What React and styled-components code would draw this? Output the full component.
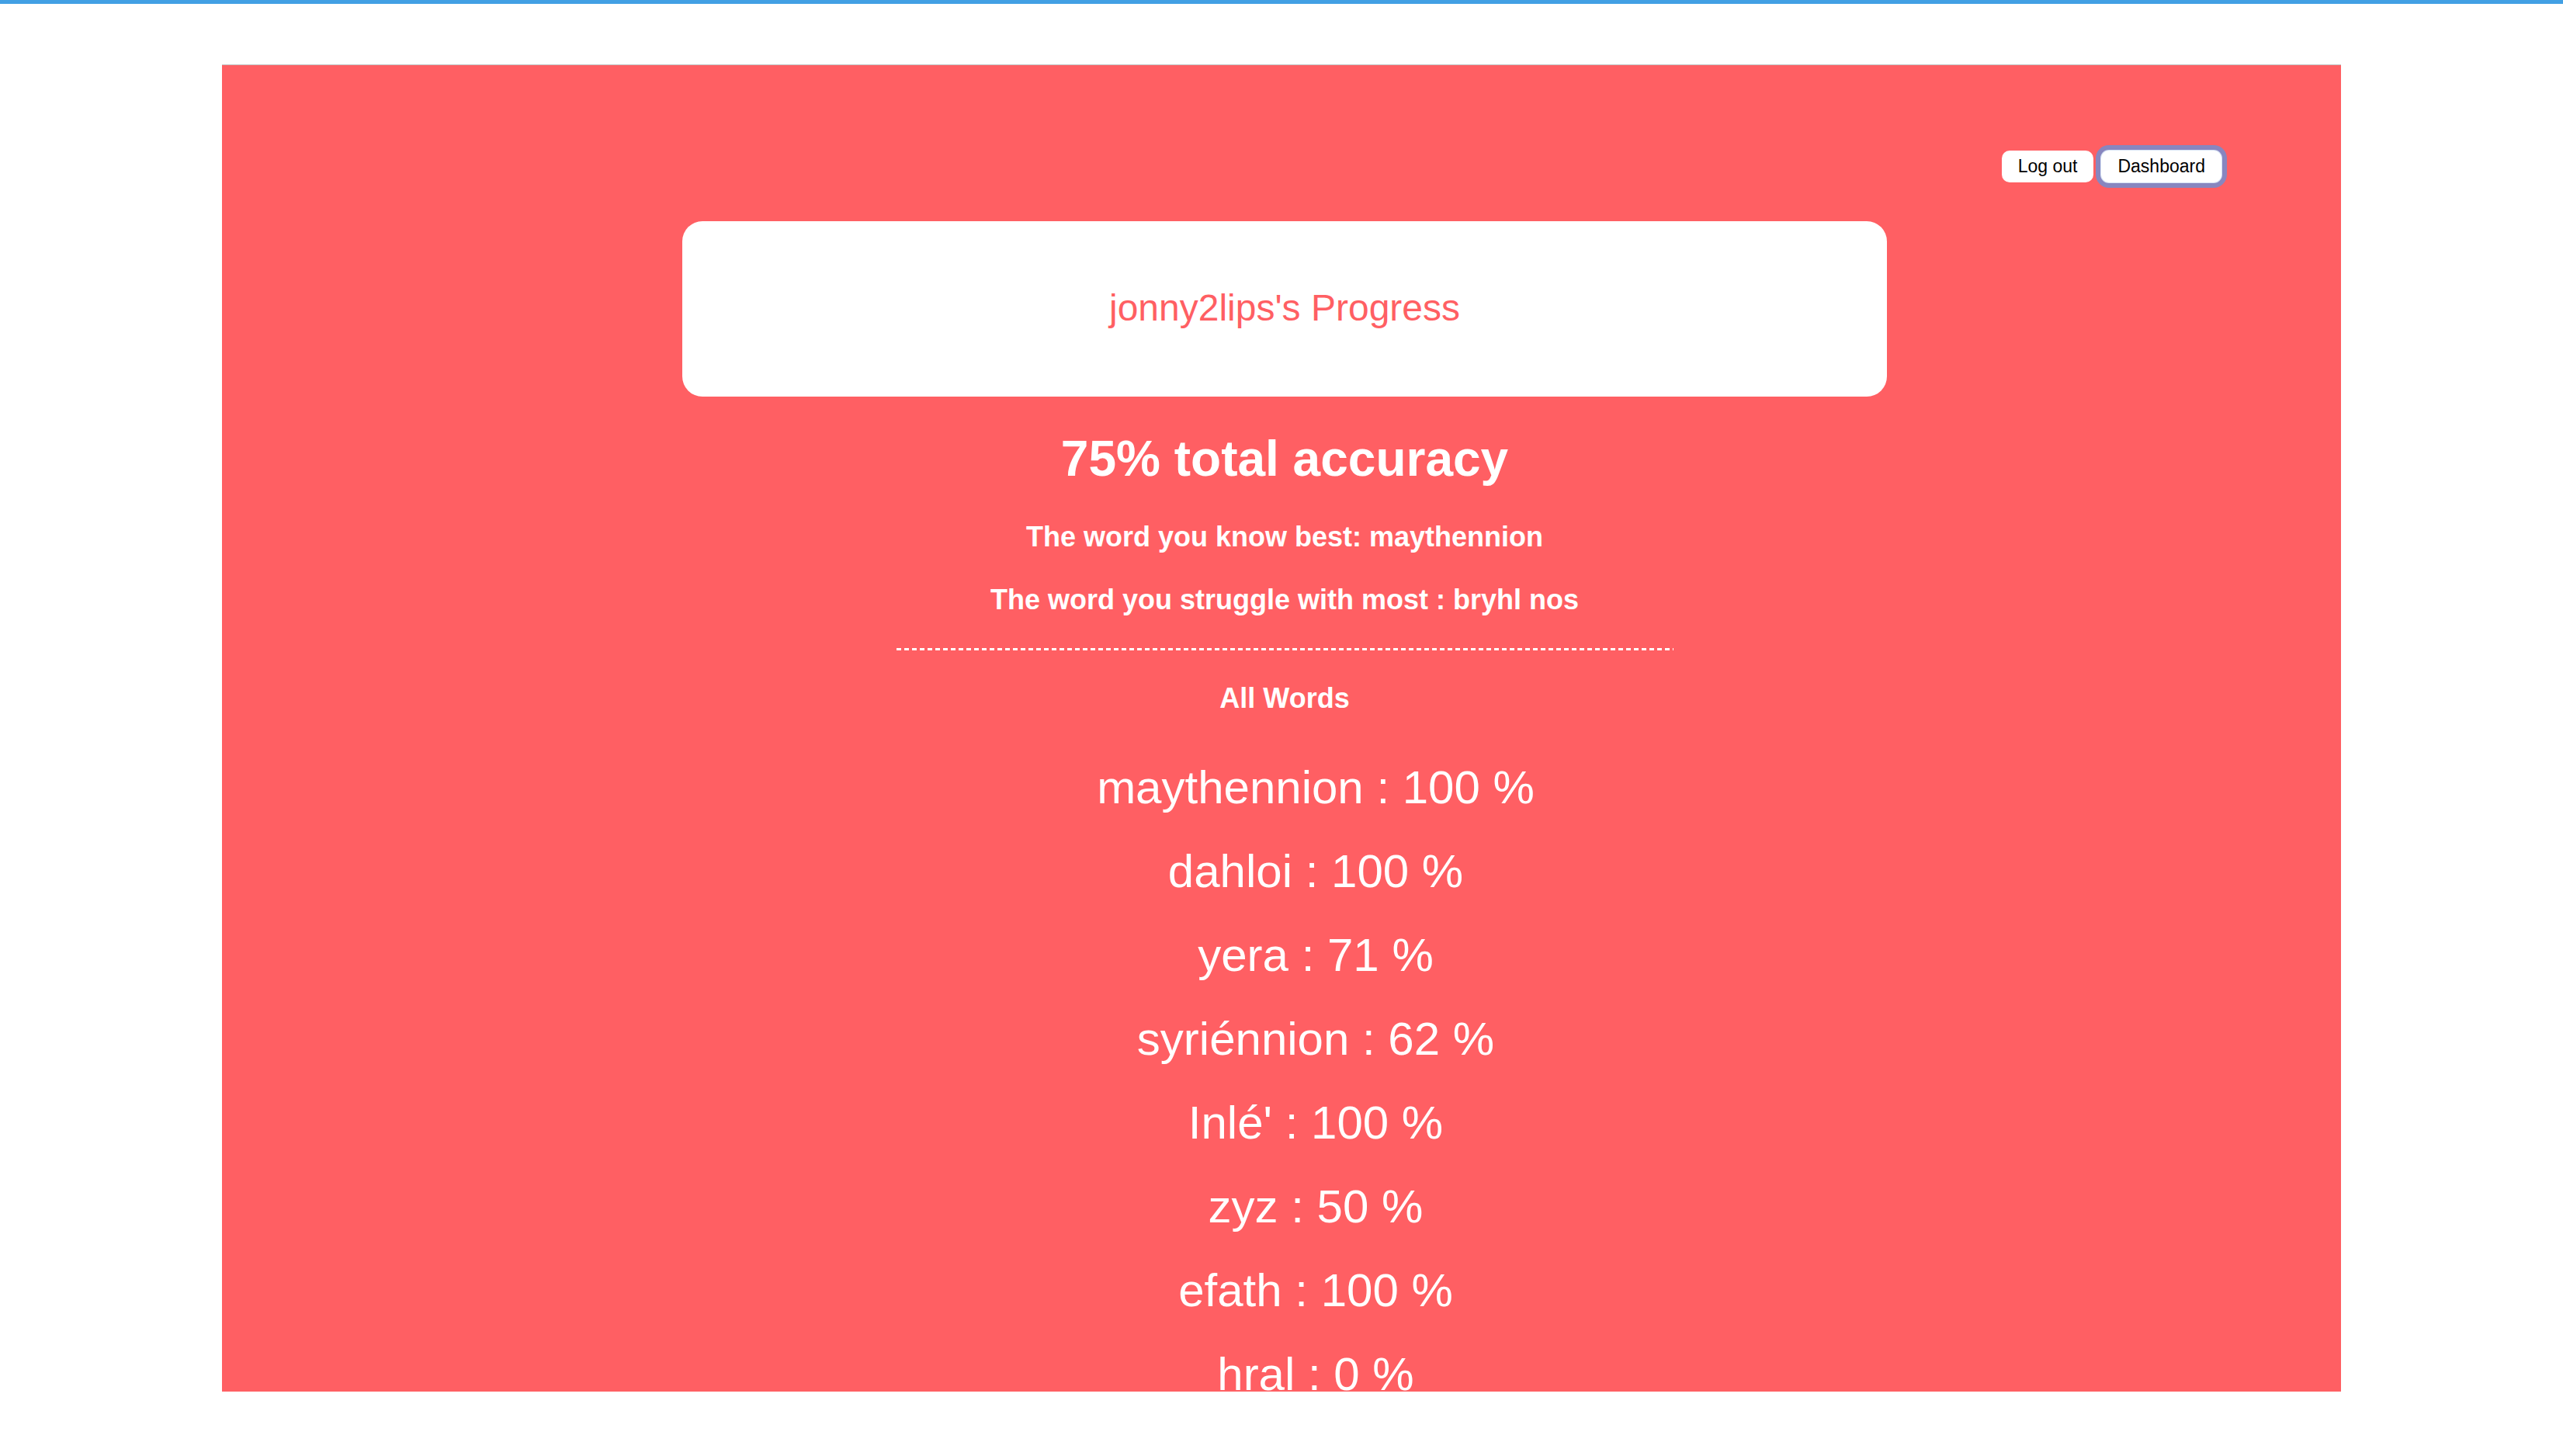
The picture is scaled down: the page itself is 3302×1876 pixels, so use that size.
import React from 'react';
import styled, { createGlobalStyle } from 'styled-components';

const words = [
  { word: 'maythennion', score: 100 },
  { word: 'dahloi', score: 100 },
  { word: 'yera', score: 71 },
  { word: 'syriénnion', score: 62 },
  { word: "Inlé'", score: 100 },
  { word: 'zyz', score: 50 },
  { word: 'efath', score: 100 },
  { word: 'hral', score: 0 },
];

const GlobalStyle = createGlobalStyle`
  body {
    margin: 0;
    background: #fff;
    font-family: "Liberation Sans", Helvetica, Arial, sans-serif;
  }
`;

const App = () => {
  return (
    <>
      <GlobalStyle />
      <TopBar />
      <Panel>
        <Nav>
          <NavButton>Log out</NavButton>
          <NavButton $focused>Dashboard</NavButton>
        </Nav>
        <HeaderCard>
          <CardTitle>jonny2lips's Progress</CardTitle>
        </HeaderCard>
        <Accuracy>75% total accuracy</Accuracy>
        <Stat $gap={43}>The word you know best: maythennion</Stat>
        <Stat $gap={39}>The word you struggle with most : bryhl nos</Stat>
        <Divider />
        <Stat $gap={41}>All Words</Stat>
        <WordList>
          {words.map((w) => (
            <WordItem key={w.word}>{`${w.word} : ${w.score} %`}</WordItem>
          ))}
        </WordList>
      </Panel>
    </>
  );
};

const TopBar = styled.div`
  height: 5px;
  background: #42a0e4;
`;

const Panel = styled.main`
  box-sizing: border-box;
  width: 2730px;
  height: 1709px;
  margin: 79px auto 0;
  padding-left: 8px;
  background: #ff5f63;
  box-shadow: 0 -1px 0 rgba(0, 0, 0, 0.25);
  overflow: hidden;
  display: flex;
  flex-direction: column;
  align-items: center;
  color: #fff;
`;

const Nav = styled.nav`
  align-self: stretch;
  display: flex;
  justify-content: flex-end;
  gap: 10px;
  margin-top: 110px;
  padding-right: 154px;
  flex-shrink: 0;
`;

const NavButton = styled.button`
  height: 41px;
  padding: 0 21px;
  background: #fff;
  color: #000;
  border: none;
  border-radius: 10px;
  font-family: "Liberation Sans", Helvetica, Arial, sans-serif;
  font-size: 23px;
  box-shadow: ${(p) => (p.$focused ? '0 0 0 1px #d6e2f4, 0 0 0 7px #8886bf' : 'none')};
  cursor: pointer;
`;

const HeaderCard = styled.div`
  box-sizing: border-box;
  width: 1552px;
  height: 226px;
  margin-top: 50px;
  padding-bottom: 4px;
  background: #fff;
  border-radius: 26px;
  display: flex;
  align-items: center;
  justify-content: center;
  flex-shrink: 0;
`;

const CardTitle = styled.h2`
  margin: 0;
  font-size: 48px;
  font-weight: 400;
  color: #ff5f63;
`;

const Accuracy = styled.h1`
  margin: 43px 0 0;
  font-size: 64px;
  line-height: 74px;
  font-weight: 700;
  flex-shrink: 0;
`;

const Stat = styled.p`
  margin: ${(p) => p.$gap}px 0 0;
  font-size: 36px;
  line-height: 42px;
  font-weight: 700;
  flex-shrink: 0;
`;

const Divider = styled.hr`
  width: 1001px;
  height: 3px;
  margin: 41px 0 0;
  border: none;
  background: repeating-linear-gradient(to right, #fff 0 6px, transparent 6px 10px);
  flex-shrink: 0;
`;

const WordList = styled.ul`
  align-self: stretch;
  list-style: none;
  margin: 59px 0 0;
  padding: 0 0 0 80px;
  flex-shrink: 0;
`;

const WordItem = styled.li`
  font-size: 60px;
  line-height: 69px;
  text-align: center;

  & + & {
    margin-top: 39px;
  }
`;

export default App;
